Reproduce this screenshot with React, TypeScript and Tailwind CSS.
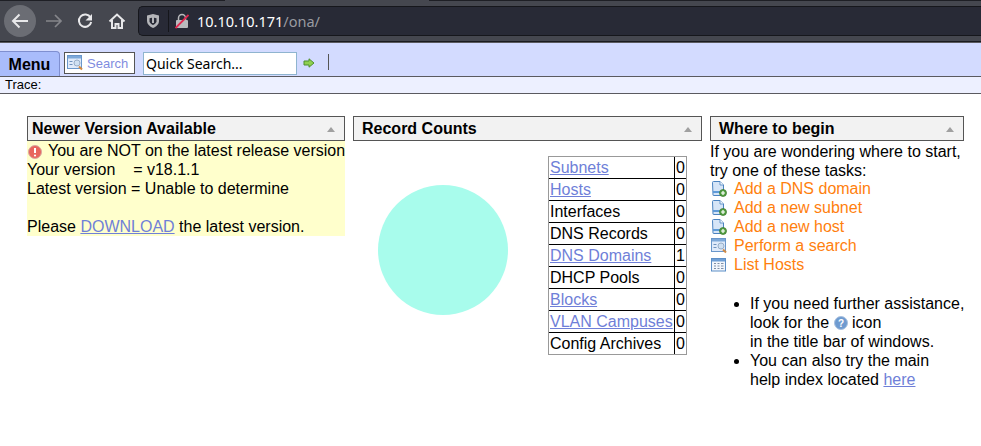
const font = "font-['Liberation_Sans',Arial,sans-serif]";

function PageIcon() {
  return (
    <svg width="16" height="17" viewBox="0 0 16 17" className="shrink-0">
      <path d="M1.500 2.500a1 1 0 0 1 1-1h6.500l3.500 3.500v10.500h-10a0.500 0.500 0 0 1-0.500-0.500z" fill="#d6e5f7" stroke="#4b83c0" />
      <path d="M9 1.500v3.500h3.500" fill="#f4f8fd" stroke="#4b83c0" strokeWidth="0.800" />
      <rect x="2" y="11" width="8" height="2" fill="#5f9ad8" />
      <circle cx="12" cy="13" r="3.500" fill="#55a043" stroke="#37752a" strokeWidth="0.700" />
      <path d="M12 11v4M10 13h4" stroke="#fff" strokeWidth="1.200" />
    </svg>
  );
}

function SearchIcon() {
  return (
    <svg width="16" height="16" viewBox="0 0 16 16" className="shrink-0">
      <rect x="0.500" y="0.500" width="14" height="13" fill="#dfeafa" stroke="#6a97cb" />
      <rect x="1" y="1" width="13" height="2.500" fill="#7ea9d9" />
      <path d="M2.500 6.500h3M2.500 9.500h3" stroke="#6f92bd" />
      <rect x="7" y="5" width="6" height="6" rx="3" fill="#cfe0f2" stroke="#98aec8" />
      <path d="M12 11.500l3 3" stroke="#d28a44" strokeWidth="2" />
    </svg>
  );
}

function ListIcon() {
  return (
    <svg width="16" height="14" viewBox="0 0 16 14" className="shrink-0">
      <rect x="0.500" y="0.500" width="14" height="12.500" fill="#f2f6fc" stroke="#5d8fc7" />
      <rect x="1" y="1" width="13" height="2.500" fill="#6f9fd6" />
      <path d="M3 5.500h2M6.500 5.500h2M10 5.500h2.500M3 8h2M6.500 8h2M10 8h2.500M3 10.500h2M6.500 10.500h2M10 10.500h2.500" stroke="#7f8fa6" />
    </svg>
  );
}

function PanelHeader({ title, width, pad }: { title: string; width: string; pad: string }) {
  return (
    <div className={`${width} ${pad} h-[25px] flex items-center justify-between border border-[#555] bg-[#f2f2f2] pr-[9px]`}>
      <span className="font-bold">{title}</span>
      <span className="w-0 h-0 mt-0.5 border-x-[4px] border-x-transparent border-b-[5px] border-b-[#a0a0a0]" />
    </div>
  );
}

const counts = [
  { name: "Subnets", n: 0, link: true },
  { name: "Hosts", n: 0, link: true },
  { name: "Interfaces", n: 0, link: false },
  { name: "DNS Records", n: 0, link: false },
  { name: "DNS Domains", n: 1, link: true },
  { name: "DHCP Pools", n: 0, link: false },
  { name: "Blocks", n: 0, link: true },
  { name: "VLAN Campuses", n: 0, link: true },
  { name: "Config Archives", n: 0, link: false },
];

const tasks = [
  { label: "Add a DNS domain", icon: <PageIcon /> },
  { label: "Add a new subnet", icon: <PageIcon /> },
  { label: "Add a new host", icon: <PageIcon /> },
  { label: "Perform a search", icon: <SearchIcon /> },
  { label: "List Hosts", icon: <ListIcon /> },
];

function BrowserBar() {
  return (
    <div className="h-[42px] bg-[#45474f] border-b border-[#1a1b20] flex flex-col">
      <div className="h-px flex shrink-0">
        <div className="w-[225px] bg-[#1e1f25]" />
        <div className="w-[204px] bg-[#45474f]" />
        <div className="flex-1 bg-[#1e1f25]" />
      </div>
      <div className="flex-1 flex items-center pl-1">
        <div className="w-8 h-8 rounded-full bg-[#6b6d74] flex items-center justify-center">
          <svg width="18" height="18" viewBox="0 0 18 18" fill="none" stroke="#e8e8ea" strokeWidth="2">
            <path d="M17 9H2M8.500 2.500L2 9l6.500 6.500" />
          </svg>
        </div>
        <svg width="18" height="18" viewBox="0 0 18 18" fill="none" stroke="#85868b" strokeWidth="1.700" className="ml-[9px]">
          <path d="M1 9h15M10 3l6 6-6 6" />
        </svg>
        <svg width="18" height="18" viewBox="0 0 18 18" className="ml-[13px]">
          <path d="M14.500 5.500A6.200 6.200 0 1 0 15.200 10" fill="none" stroke="#e8e8ea" strokeWidth="2" />
          <path d="M16 2v6.500H9.500z" fill="#e8e8ea" />
        </svg>
        <svg width="18" height="18" viewBox="0 0 18 18" fill="none" stroke="#e8e8ea" strokeWidth="2" className="ml-[14px]">
          <path d="M1.500 9.500L9 2.500l7.500 7" />
          <path d="M4 8v8h3.500v-4h3v4H14V8" />
        </svg>
        <div className="ml-3 flex-1 h-[30px] bg-[#282a36] border-y border-l border-[#16171c] rounded-l-[5px] flex items-center">
          <svg width="14" height="16" viewBox="0 0 14 16" className="ml-[7px]">
            <path d="M7 1l6 1.500v5.500c0 3-2.500 5.500-6 7C3.500 13.500 1 11 1 8V2.500z" fill="#b4b5b9" />
            <path d="M7 4.500L10.500 5.200v3c0 1.500-1.500 2.800-3.500 3.800z" fill="#282a36" />
            <path d="M7 4.500L3.500 5.200v3c0 1.500 1.500 2.800 3.500 3.800z" fill="#282a36" />
            <rect x="6" y="4" width="2" height="6" fill="#b4b5b9" />
          </svg>
          <span className="ml-[8px] w-px h-[22px] bg-[#15161b]" />
          <svg width="14" height="16" viewBox="0 0 14 16" className="ml-[6px]">
            <rect x="1" y="7" width="12" height="8" rx="1" fill="#b9babd" />
            <path d="M3.500 7V5a3.500 3.500 0 0 1 7 0v2" fill="none" stroke="#b9babd" strokeWidth="1.500" />
            <path d="M0.500 15L13.500 2" stroke="#e22850" strokeWidth="1.800" />
          </svg>
          <span className="ml-[8px] text-[14.5px] text-white font-['Noto_Sans',sans-serif]">
            10.10.10.171<span className="text-[#9a9ba1]">/ona/</span>
          </span>
        </div>
      </div>
    </div>
  );
}

export default function App() {
  return (
    <div className={`w-[981px] h-[446px] overflow-hidden bg-white text-[16px] leading-[19px] text-black ${font}`}>
      <BrowserBar />

      <div className="h-[35px] bg-[#d3dbff] border-y border-[#5a5a60] flex items-end">
        <div className="w-[60px] h-[25px] bg-[#a9bcfb] border-t border-r border-[#7f8fd0] rounded-tr-[4px] flex items-center justify-center font-bold">
          Menu
        </div>
        <div className="ml-[4px] mb-[2px] w-[71px] h-[22px] bg-white border border-[#555] flex items-center pl-[2px] gap-[4px] text-[13px] text-[#7f8ce0]">
          <SearchIcon />
          Search
        </div>
        <div className="ml-[8px] mb-[1px] w-[154px] h-[23px] bg-white border border-[#8fb4cf] flex items-center pl-[2px] text-[14px] font-['Noto_Sans',sans-serif]">
          Quick Search...
        </div>
        <svg width="12" height="10" viewBox="0 0 12 10" className="ml-[6px] mb-[8px]">
          <path d="M1 3h5V0.800L11 5 6 9.200V7H1z" fill="#8fd04f" stroke="#4f8f2f" />
        </svg>
        <span className="ml-[13px] mb-[6px] w-px h-[16px] bg-[#555]" />
      </div>

      <div className="h-[17px] bg-[#edf0ff] border-b border-[#5a5a60] pl-[5px] text-[13px] leading-[16px]">
        Trace:
      </div>

      <div className="flex items-start gap-2 pt-[22px] pl-[27px]">
        <div className="w-[318px]">
          <PanelHeader title="Newer Version Available" width="w-[318px]" pad="pl-1" />
          <div className="bg-[#ffffcc] h-[95px] whitespace-pre">
            <div className="flex items-center gap-[6px] pl-px">
              <svg width="14" height="14" viewBox="0 0 14 14" className="shrink-0 mt-[2px]">
                <circle cx="7" cy="7" r="6.500" fill="#e8655c" stroke="#d9a8a0" />
                <path d="M7 3v5" stroke="#fff" strokeWidth="2" />
                <circle cx="7" cy="10.500" r="1.100" fill="#fff" />
              </svg>
              You are NOT on the latest release version
            </div>
            <div>Your version    = v18.1.1</div>
            <div>Latest version = Unable to determine</div>
            <div className="h-[19px]" />
            <div>
              Please <a className="text-[#6f7fd8] underline">DOWNLOAD</a> the latest version.
            </div>
          </div>
        </div>

        <div className="w-[349px]">
          <PanelHeader title="Record Counts" width="w-[349px]" pad="pl-2" />
          <div className="flex items-start pt-[15px] pl-[25px]">
            <svg width="130" height="130" viewBox="0 0 130 130" className="mt-[29px] shrink-0">
              <circle cx="65" cy="65" r="65" fill="#a8fcec" />
            </svg>
            <div className="ml-[40px] w-[139px] border border-[#999] leading-[21px]">
              {counts.map((row, i) => (
                <div
                  key={row.name}
                  className={`grid grid-cols-[126px_11px] ${i < counts.length - 1 ? "h-[22px] border-b border-black" : "h-[21px]"}`}
                >
                  <div className="border-r border-black pl-px whitespace-nowrap">
                    {row.link ? <a className="text-[#6f7fd8] underline">{row.name}</a> : row.name}
                  </div>
                  <div className="pl-px">{row.n}</div>
                </div>
              ))}
            </div>
          </div>
        </div>

        <div className="w-[254px]">
          <PanelHeader title="Where to begin" width="w-[254px]" pad="pl-2" />
          <div className="pt-px">
            <div className="whitespace-nowrap">If you are wondering where to start,</div>
            <div className="mb-[-1px]">try one of these tasks:</div>
            {tasks.map((t) => (
              <div key={t.label} className="flex items-center h-[19px] pl-px">
                <span className="w-[23px] flex">{t.icon}</span>
                <span className="text-[#ff7f0e]">{t.label}</span>
              </div>
            ))}
          </div>
          <ul className="list-disc pl-[40px] mt-[20px] whitespace-nowrap">
            <li>If you need further assistance,</li>
            <li className="list-none">
              look for the{" "}
              <svg width="14" height="14" viewBox="0 0 14 14" className="inline align-[-2px]">
                <circle cx="7" cy="7" r="6.500" fill="#6f9bd0" stroke="#a9c1de" />
                <text x="7" y="10.500" textAnchor="middle" fontSize="10" fontWeight="700" fill="#fff">?</text>
              </svg>{" "}
              icon
            </li>
            <li className="list-none">in the title bar of windows.</li>
            <li>You can also try the main</li>
            <li className="list-none">
              help index located <a className="text-[#6f7fd8] underline">here</a>
            </li>
          </ul>
        </div>
      </div>
    </div>
  );
}
